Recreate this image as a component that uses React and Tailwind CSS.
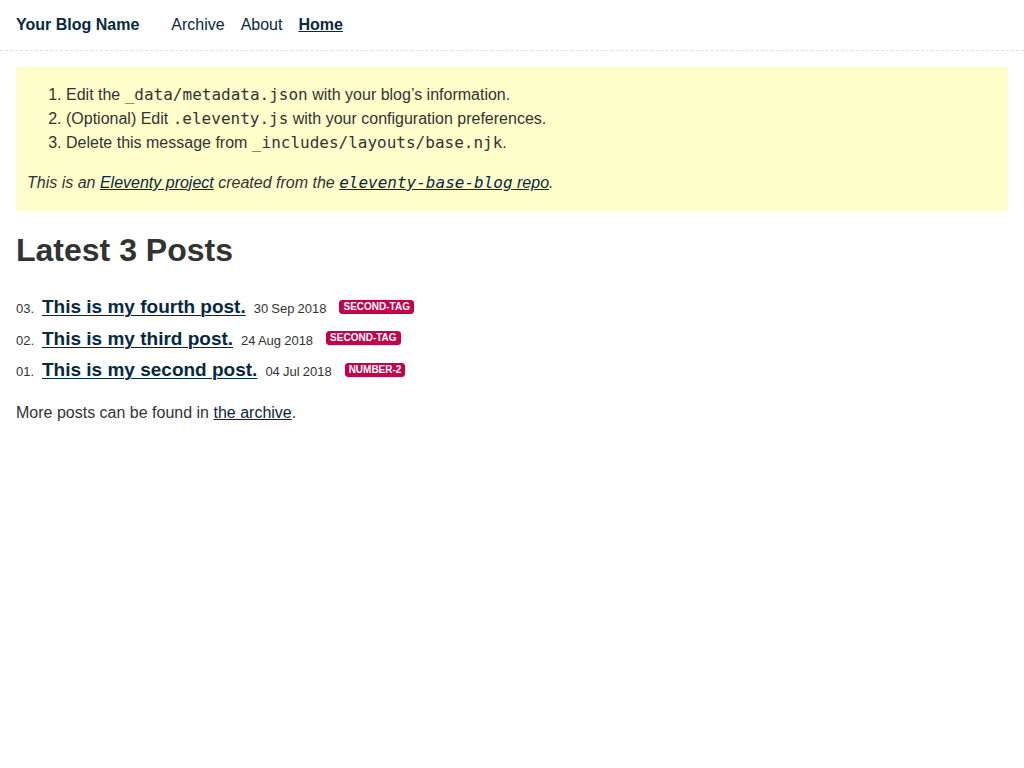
const posts = [
  { n: "03", title: "This is my fourth post.", date: "30 Sep 2018", tag: "second-tag" },
  { n: "02", title: "This is my third post.", date: "24 Aug 2018", tag: "second-tag" },
  { n: "01", title: "This is my second post.", date: "04 Jul 2018", tag: "number-2" },
];

const mono = "font-['DejaVu_Sans_Mono',monospace]";

export default function App() {
  return (
    <div className="min-h-screen bg-white font-['Liberation_Sans',Arial,sans-serif] text-[16px] text-[#333]">
      <header className="flex items-center border-b border-dashed border-[#e0e0e0]">
        <a href="#" className="my-4 px-4 font-bold leading-[18px] text-[#082840] no-underline">
          Your Blog Name
        </a>
        <ul className="my-4 ml-4 flex leading-[18px]">
          <li className="mr-4">
            <a href="#" className="text-[#082840]">Archive</a>
          </li>
          <li className="mr-4">
            <a href="#" className="text-[#082840]">About</a>
          </li>
          <li className="mr-4">
            <a href="#" className="font-bold text-[#082840] underline">Home</a>
          </li>
        </ul>
      </header>

      <main className="p-4">
        <div className="bg-[#ffc] px-[10px] py-4 leading-6">
          <ol className="list-decimal pl-10">
            <li>
              Edit the <code className={mono}>_data/metadata.json</code> with your blog’s information.
            </li>
            <li>
              (Optional) Edit <code className={mono}>.eleventy.js</code> with your configuration preferences.
            </li>
            <li>
              Delete this message from <code className={mono}>_includes/layouts/base.njk</code>.
            </li>
          </ol>
          <p className="mt-4 pl-px italic">
            This is an{" "}
            <a href="#" className="text-[#082840] underline">Eleventy project</a> created from the{" "}
            <a href="#" className="text-[#082840] underline">
              <code className={mono + " italic"}>eleventy-base-blog</code> repo
            </a>
            .
          </p>
        </div>

        <h1 className="mt-[21px] mb-[22px] text-[32px] font-bold leading-[37px] text-[#333]">Latest 3 Posts</h1>

        <ol>
          {posts.map((p) => (
            <li key={p.n} className="flex h-[31.5px] items-baseline leading-[31.5px]">
              <span className="w-[21px] text-[13px] leading-5">{p.n}.</span>
              <a
                href="#"
                className="pl-[5px] pr-[8px] text-[19px] font-bold text-[#082840] underline decoration-1 underline-offset-2"
              >
                {p.title}
              </a>
              <span className="text-[13px] leading-5 [word-spacing:-0.5px]">{p.date}</span>
              <a
                href="#"
                className="ml-[13px] self-center rounded-[3px] border border-[#c5004a] bg-[#c5004a] px-[3px] text-[10px] font-bold uppercase leading-[12px] text-white no-underline"
              >
                {p.tag}
              </a>
            </li>
          ))}
        </ol>

        <p className="mt-[15px] leading-6">
          More posts can be found in{" "}
          <a href="#" className="text-[#082840] underline">the archive</a>.
        </p>
      </main>
    </div>
  );
}
